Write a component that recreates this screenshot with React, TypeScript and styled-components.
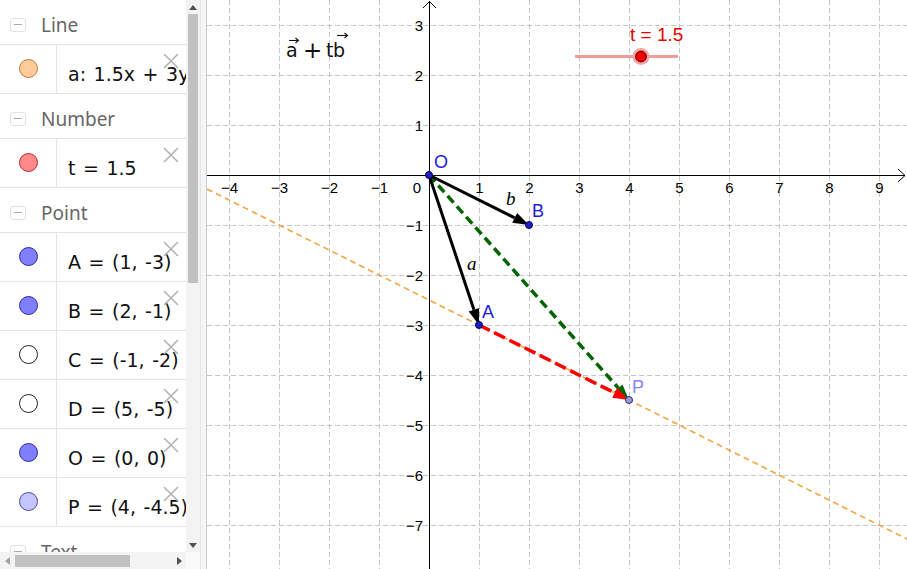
import React from 'react';
import styled, { createGlobalStyle } from 'styled-components';

const Global = createGlobalStyle`
  html, body { margin: 0; padding: 0; width: 907px; height: 569px; overflow: hidden; background: #fff; }
  #root { width: 907px; height: 569px; }
`;

const Page = styled.div`
  display: flex;
  width: 907px;
  height: 569px;
  overflow: hidden;
  font-family: "Noto Sans", "DejaVu Sans", sans-serif;
`;

const AlgebraPanel = styled.div`
  width: 200px;
  flex: none;
  display: flex;
  flex-direction: column;
  background: #fff;
`;

const AlgebraBody = styled.div`
  display: flex;
  height: 552px;
`;

const List = styled.div`
  width: 186px;
  flex: none;
  overflow: hidden;
`;

const SectionHeader = styled.div`
  height: 45px;
  box-sizing: border-box;
  display: flex;
  align-items: center;
  padding: 5px 0 0 10px;
  border-bottom: 1px solid #e3e3e3;
  color: #666;
  font-size: 19px;
  white-space: nowrap;
`;

const Collapse = styled.span`
  width: 16px;
  height: 14px;
  box-sizing: border-box;
  border: 1px solid #e0e0e0;
  border-radius: 3px;
  display: flex;
  align-items: center;
  justify-content: center;
  margin-right: 15px;
  &::before {
    content: '';
    width: 8px;
    height: 1px;
    background: #aaa;
  }
`;

const ItemRow = styled.div`
  position: relative;
  display: flex;
  height: 49px;
  box-sizing: border-box;
  border-bottom: 1px solid #e3e3e3;
`;

const MarbleCell = styled.div`
  width: 57px;
  flex: none;
  box-sizing: border-box;
  border-right: 1px solid #e3e3e3;
  display: flex;
  align-items: center;
  justify-content: center;
  padding-bottom: 2px;
`;

const Marble = styled.span<{ $fill: string; $stroke: string }>`
  width: 19px;
  height: 19px;
  box-sizing: border-box;
  border-radius: 50%;
  background: ${p => p.$fill};
  border: 1px solid ${p => p.$stroke};
`;

const Formula = styled.div`
  flex: 1;
  padding: 17px 0 0 11px;
  font-family: "DejaVu Sans", sans-serif;
  font-size: 19px;
  line-height: 24px;
  word-spacing: 1.5px;
  color: #111;
  white-space: nowrap;
  overflow: hidden;
`;

const DeleteBtn = styled.svg`
  position: absolute;
  top: 8px;
  left: 163px;
  width: 16px;
  height: 16px;
`;

const VScroll = styled.div`
  width: 14px;
  flex: none;
  display: flex;
  flex-direction: column;
  align-items: center;
  background: #f3f3f3;
`;

const ArrowBox = styled.div`
  height: 14px;
  width: 14px;
  flex: none;
  display: flex;
  align-items: center;
  justify-content: center;
`;

const Tri = styled.span<{ $dir: 'up' | 'down' | 'left' | 'right' }>`
  width: 0;
  height: 0;
  border: 4px solid transparent;
  ${p =>
    p.$dir === 'up'
      ? 'border-bottom: 5px solid #505050; border-top-width: 0;'
      : p.$dir === 'down'
      ? 'border-top: 5px solid #505050; border-bottom-width: 0;'
      : p.$dir === 'left'
      ? 'border-right: 5px solid #a3a3a3; border-left-width: 0;'
      : 'border-left: 5px solid #505050; border-right-width: 0;'}
`;

const VTrack = styled.div`
  flex: 1;
  width: 100%;
  display: flex;
  justify-content: center;
`;

const VThumb = styled.div`
  width: 10px;
  height: 269px;
  background: #c1c1c1;
`;

const HScrollRow = styled.div`
  height: 17px;
  display: flex;
`;

const HScroll = styled.div`
  width: 186px;
  display: flex;
  align-items: center;
  background: #f3f3f3;
`;

const HThumb = styled.div`
  width: 115px;
  height: 12px;
  margin-left: 1px;
  background: #c1c1c1;
`;

const HSpacer = styled.div`
  flex: 1;
`;

const Corner = styled.div`
  width: 14px;
  background: #fafafa;
`;

const Divider = styled.div`
  width: 7px;
  flex: none;
  box-sizing: border-box;
  background: #f5f5f5;
  border-left: 1px solid #e4e4e4;
  border-right: 1px solid #cccccc;
`;

const Graphics = styled.div`
  flex: 1;
  background: #fff;
  overflow: hidden;
`;

type Item = { text: string; fill: string; stroke: string };
type Section = { title: string; items: Item[] };

const blue = { fill: '#8080ff', stroke: '#2a2aa8' };
const empty = { fill: '#ffffff', stroke: '#222' };

const sections: Section[] = [
  { title: 'Line', items: [{ text: 'a: 1.5x + 3y = -7.5', fill: '#ffcc99', stroke: '#c27a3e' }] },
  { title: 'Number', items: [{ text: 't = 1.5', fill: '#ff8a8a', stroke: '#c02a2a' }] },
  {
    title: 'Point',
    items: [
      { text: 'A = (1, -3)', ...blue },
      { text: 'B = (2, -1)', ...blue },
      { text: 'C = (-1, -2)', ...empty },
      { text: 'D = (5, -5)', ...empty },
      { text: 'O = (0, 0)', ...blue },
      { text: 'P = (4, -4.5)', fill: '#c4c4ff', stroke: '#4848a8' },
    ],
  },
  { title: 'Text', items: [] },
];

const OX = 429;
const OY = 175;
const U = 50;
const sx = (x: number) => OX + U * x;
const sy = (y: number) => OY - U * y;

function arrow(x1: number, y1: number, x2: number, y2: number, len = 16, half = 5.5) {
  const dx = x2 - x1;
  const dy = y2 - y1;
  const d = Math.hypot(dx, dy);
  const ux = dx / d;
  const uy = dy / d;
  const bx = x2 - ux * len;
  const by = y2 - uy * len;
  const px = -uy * half;
  const py = ux * half;
  return {
    bx,
    by,
    head: `${x2},${y2} ${bx + px},${by + py} ${bx - px},${by - py}`,
  };
}

const Vector: React.FC<{
  from: [number, number];
  to: [number, number];
  color: string;
  dash?: string;
  width?: number;
}> = ({ from, to, color, dash, width = 3 }) => {
  const a = arrow(from[0], from[1], to[0], to[1]);
  return (
    <g>
      <line
        x1={from[0]}
        y1={from[1]}
        x2={a.bx}
        y2={a.by}
        stroke={color}
        strokeWidth={width}
        strokeDasharray={dash}
      />
      <polygon points={a.head} fill={color} />
    </g>
  );
};

const minus = (n: number) => (n < 0 ? `\u2212${-n}` : `${n}`);

const GraphView: React.FC = () => {
  const xs = Array.from({ length: 14 }, (_, i) => i - 4).filter(k => k !== 0);
  const ys = Array.from({ length: 11 }, (_, i) => i - 7).filter(k => k !== 0);
  const lineY = (x: number) => sy(-2.5 - 0.5 * ((x - OX) / U));
  const O: [number, number] = [sx(0), sy(0)];
  const A: [number, number] = [sx(1), sy(-3)];
  const B: [number, number] = [sx(2), sy(-1)];
  const P: [number, number] = [sx(4), sy(-4.5)];
  const labelFont = '"Liberation Sans", Arial, sans-serif';
  return (
    <svg width="700" height="569" viewBox="207 0 700 569" style={{ display: 'block' }}>
      <g stroke="#c4c4c4" strokeWidth="1" strokeDasharray="5,3">
        {xs.map(k => (
          <line key={`gx${k}`} x1={sx(k) + 0.5} y1={0} x2={sx(k) + 0.5} y2={569} />
        ))}
        {ys.map(k => (
          <line key={`gy${k}`} x1={207} y1={sy(k) + 0.5} x2={907} y2={sy(k) + 0.5} />
        ))}
      </g>
      <g stroke="#000" strokeWidth="1" fill="none">
        <line x1={207} y1={OY + 0.5} x2={905} y2={OY + 0.5} />
        <line x1={OX + 0.5} y1={1} x2={OX + 0.5} y2={569} />
        <polyline points={`898,169 905,175.5 898,182`} />
        <polyline points={`423,8 429.5,1.5 436,8`} />
      </g>
      <g fontFamily={labelFont} fontSize="15" fill="#000">
        {xs.map(k => (
          <text key={`lx${k}`} x={sx(k) + 0.5} y={193} textAnchor="middle">
            {minus(k)}
          </text>
        ))}
        <text x={417} y={193} textAnchor="middle">0</text>
        {ys.map(k => (
          <text key={`ly${k}`} x={423} y={sy(k) + 6} textAnchor="end">
            {minus(k)}
          </text>
        ))}
      </g>
      <line
        x1={207}
        y1={lineY(207)}
        x2={907}
        y2={lineY(907)}
        stroke="#f5a442"
        strokeWidth="1.6"
        strokeDasharray="6,4"
      />
      <Vector from={O} to={P} color="#006400" dash="9,5" width={3.5} />
      <Vector from={A} to={P} color="#ff0000" dash="12,5" width={3.5} />
      <Vector from={O} to={A} color="#000" />
      <Vector from={O} to={B} color="#000" />
      <g stroke="#000060" strokeWidth="1" fill="#2020c0">
        <circle cx={O[0]} cy={O[1]} r={3.5} />
        <circle cx={A[0]} cy={A[1]} r={3.5} />
        <circle cx={B[0]} cy={B[1]} r={3.5} />
      </g>
      <circle cx={P[0]} cy={P[1]} r={3.5} fill="#9a9ae0" stroke="#303060" strokeWidth="1" />
      <g fontFamily={labelFont} fontSize="18" fill="#1c1ce0">
        <text x={434} y={168}>O</text>
        <text x={532} y={217}>B</text>
        <text x={482} y={318}>A</text>
        <text x={632} y={393} fill="#8585ff">P</text>
      </g>
      <g fontFamily={'"Liberation Serif", serif'} fontStyle="italic" fontSize="19" fill="#000">
        <text x={467} y={270}>a</text>
        <text x={506} y={205}>b</text>
      </g>
      <g fontFamily={'"DejaVu Sans", sans-serif'} fontSize="19" fill="#111">
        <text x={286} y={57}>a</text>
        <text x={303} y={58} fontSize="23">+</text>
        <text x={326} y={57}>t</text>
        <text x={333} y={57}>b</text>
      </g>
      <g stroke="#111" strokeWidth="1.1" fill="none">
        <line x1={289} y1={40.5} x2={298} y2={40.5} />
        <polyline points="295.5,38 298.5,40.5 295.5,43" />
        <line x1={337} y1={35.5} x2={347} y2={35.5} />
        <polyline points="344.5,33 347.5,35.5 344.5,38" />
      </g>
      <line x1={575} y1={56.5} x2={678} y2={56.5} stroke="#f08a8a" strokeOpacity="0.85" strokeWidth="3" />
      <circle cx={641} cy={56.5} r={8.5} fill="#f4a3a3" />
      <circle cx={641} cy={56.5} r={5.4} fill="#ee0000" stroke="#660000" strokeWidth="1" />
      <text x={630} y={40.5} fontFamily={labelFont} fontSize="19" fill="#e60000">
        t = 1.5
      </text>
    </svg>
  );
};

const App: React.FC = () => (
  <Page>
    <Global />
    <AlgebraPanel>
      <AlgebraBody>
        <List>
          {sections.map(s => (
            <React.Fragment key={s.title}>
              <SectionHeader>
                <Collapse />
                {s.title}
              </SectionHeader>
              {s.items.map(it => (
                <ItemRow key={it.text}>
                  <MarbleCell>
                    <Marble $fill={it.fill} $stroke={it.stroke} />
                  </MarbleCell>
                  <Formula>{it.text}</Formula>
                  <DeleteBtn viewBox="0 0 16 16">
                    <path d="M1 1 L15 15 M15 1 L1 15" stroke="#b3b3b3" strokeWidth="1.6" fill="none" />
                  </DeleteBtn>
                </ItemRow>
              ))}
            </React.Fragment>
          ))}
        </List>
        <VScroll>
          <ArrowBox>
            <Tri $dir="up" />
          </ArrowBox>
          <VTrack>
            <VThumb />
          </VTrack>
          <ArrowBox>
            <Tri $dir="down" />
          </ArrowBox>
        </VScroll>
      </AlgebraBody>
      <HScrollRow>
        <HScroll>
          <ArrowBox>
            <Tri $dir="left" />
          </ArrowBox>
          <HThumb />
          <HSpacer />
          <ArrowBox>
            <Tri $dir="right" />
          </ArrowBox>
        </HScroll>
        <Corner />
      </HScrollRow>
    </AlgebraPanel>
    <Divider />
    <Graphics>
      <GraphView />
    </Graphics>
  </Page>
);

export default App;
